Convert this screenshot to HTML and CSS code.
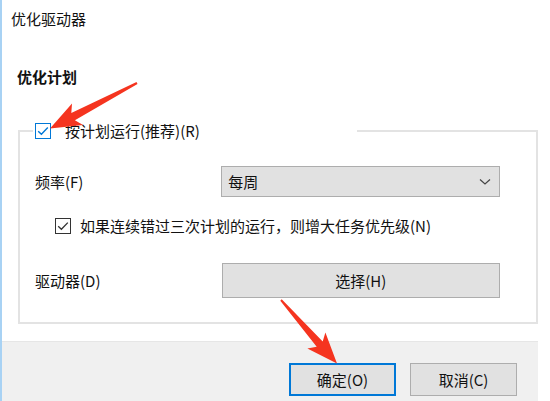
FILE: index.html
```html
<!DOCTYPE html>
<html>
<head>
  <meta charset="UTF-8">
  <title>优化驱动器</title>
  <link rel="stylesheet" href="styles.css">
</head>
<body>
  <div class="window">
    <div class="title">优化驱动器</div>
    <div class="heading">优化计划</div>

    <fieldset class="group">
      <legend class="group-head">
        <span class="check check-blue">
          <svg width="16" height="16" viewBox="0 0 16 16"><rect x="0.5" y="0.5" width="15" height="15" fill="#fff" stroke="#0078d7"/><path d="M3.2 8.2 L6.4 11.3 L12.8 4.6" fill="none" stroke="#0078d7" stroke-width="1.4"/></svg>
        </span>
        <span>按计划运行(推荐)(R)</span>
      </legend>

      <div class="row">
        <span class="row-label">频率(F)</span>
        <div class="select">
          <span>每周</span>
          <svg class="chevron" width="12" height="8" viewBox="0 0 12 8"><path d="M1 1.5 L6 6 L11 1.5" fill="none" stroke="#444" stroke-width="1.2"/></svg>
        </div>
      </div>

      <div class="row row-check">
        <span class="check">
          <svg width="16" height="16" viewBox="0 0 16 16"><rect x="0.5" y="0.5" width="15" height="15" fill="#fff" stroke="#333"/><path d="M3.2 8.2 L6.4 11.3 L12.8 4.6" fill="none" stroke="#333" stroke-width="1.3"/></svg>
        </span>
        <span>如果连续错过三次计划的运行，则增大任务优先级(N)</span>
      </div>

      <div class="row row-drive">
        <span class="row-label">驱动器(D)</span>
        <div class="btn btn-wide">选择(H)</div>
      </div>
    </fieldset>

    <div class="footer">
      <div class="btn btn-default">确定(O)</div>
      <div class="btn">取消(C)</div>
    </div>

    <!-- red annotation arrows drawn over the dialog -->
    <svg class="arrows" width="550" height="401" viewBox="0 0 550 401">
      <polygon points="137.5,83.9 74.9,120.2 83.0,125.0 50,128.5 72.0,103.6 71.3,113.0 136.5,82.1" fill="#f5341f"/>
      <polygon points="280.3,300.7 316.7,346.8 307.4,348.4 337,363.5 325.4,332.4 322.7,341.4 281.7,299.3" fill="#f5341f"/>
    </svg>
  </div>
</body>
</html>
```

FILE: styles.css
```css
body { margin: 0; background: #fff; font-family: "Noto Sans CJK SC", "Noto Sans", sans-serif; font-size: 15px; color: #111; }
.window { position: relative; width: 536px; height: 401px; border-left: 2px solid #a8d2f4; background: #fff; overflow: hidden; }
.title { padding: 8px 0 0 9px; line-height: 22px; }
.heading { margin-top: 37px; padding-left: 15px; line-height: 20px; font-weight: bold; }

.group { margin: 35px 0 0 16px; padding: 0 36px 24px 13px; border: 2px solid #e3e3e3; min-width: 0; }
.group-head { display: flex; align-items: center; gap: 14px; width: 320px; height: 18px; padding: 0 2px; line-height: 18px; }
.check { display: flex; width: 16px; height: 16px; }

.row { display: flex; align-items: center; padding-left: 2px; margin-top: 26px; }
.row-label { width: 187px; }
.row-check { margin-top: 21px; height: 16px; gap: 9px; padding-left: 22px; line-height: 16px; }
.row-drive { margin-top: 29px; }

.select { display: flex; align-items: center; justify-content: space-between; box-sizing: border-box; width: 280px; height: 31px; padding: 0 8px 0 6px; background: #e1e1e1; border: 1px solid #adadad; }
.chevron { display: block; }

.btn { display: flex; align-items: center; justify-content: center; box-sizing: border-box; width: 107px; height: 33px; background: #e1e1e1; border: 1px solid #adadad; }
.btn-wide { width: 279px; height: 35px; }
.btn-default { border: 2px solid #0078d7; }

.footer { display: flex; justify-content: flex-end; gap: 14px; height: 60px; margin-top: 17px; padding: 21px 21px 0 0; box-sizing: border-box; background: #f0f0f0; border-top: 1px solid #e6e6e6; }

.arrows { position: absolute; top: 0; left: -2px; pointer-events: none; }
```
